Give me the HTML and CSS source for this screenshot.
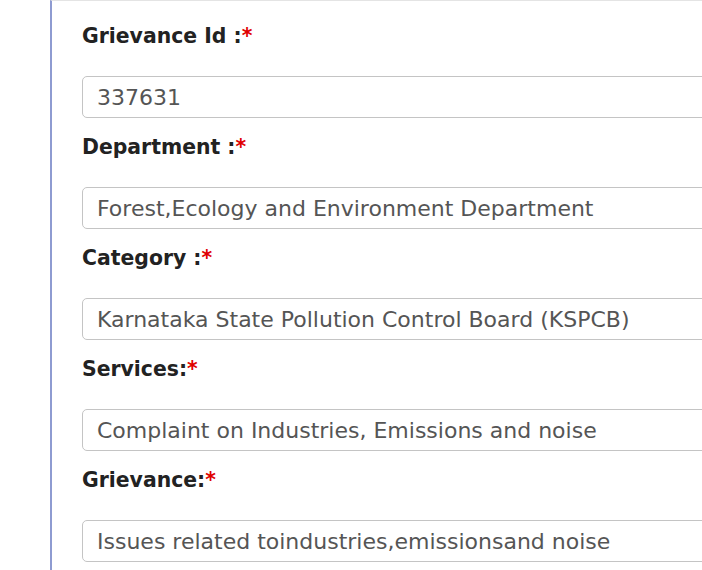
FILE: index.html
```html
<!DOCTYPE html>
<html>
<head>
<meta charset="utf-8">
<link rel="stylesheet" href="styles.css">
</head>
<body>
<div class="panel">
  <div class="group">
    <label class="lbl">Grievance Id :<span class="req">*</span></label>
    <input class="field" type="text" value="337631" readonly>
  </div>
  <div class="group">
    <label class="lbl">Department :<span class="req">*</span></label>
    <input class="field" type="text" value="Forest,Ecology and Environment Department" readonly>
  </div>
  <div class="group">
    <label class="lbl">Category :<span class="req">*</span></label>
    <input class="field" type="text" value="Karnataka State Pollution Control Board (KSPCB)" readonly>
  </div>
  <div class="group">
    <label class="lbl">Services:<span class="req">*</span></label>
    <input class="field" type="text" value="Complaint on Industries, Emissions and noise" readonly>
  </div>
  <div class="group">
    <label class="lbl">Grievance:<span class="req">*</span></label>
    <input class="field" type="text" value="Issues related toindustries,emissionsand noise" readonly>
  </div>
</div>
</body>
</html>
```
FILE: styles.css
```css
html, body {
  margin: 0;
  padding: 0;
  background: #ffffff;
  overflow: hidden;
}
body {
  font-family: "DejaVu Sans", sans-serif;
}
.panel {
  margin-left: 50px;
  border-left: 2px solid #8e9bd1;
  border-top: 1px solid #e4e4e4;
  padding: 20px 0 0 30px;
  height: 570px;
  box-sizing: border-box;
}
.group {
  display: flex;
  flex-direction: column;
}
.lbl {
  display: block;
  height: 30px;
  line-height: 30px;
  font-size: 20.4px;
  font-weight: bold;
  color: #222222;
  margin: 14px 0 25px 0;
}
.group:first-child .lbl {
  margin-top: 0;
}
.req {
  color: #e00000;
}
.field {
  height: 42px;
  width: calc(100% + 20px);
  box-sizing: border-box;
  border: 1px solid #c4c4c4;
  border-radius: 5px;
  padding: 0 14px;
  font-family: "DejaVu Sans", sans-serif;
  font-size: 22px;
  color: #555555;
  background: #ffffff;
  outline: none;
}
```
